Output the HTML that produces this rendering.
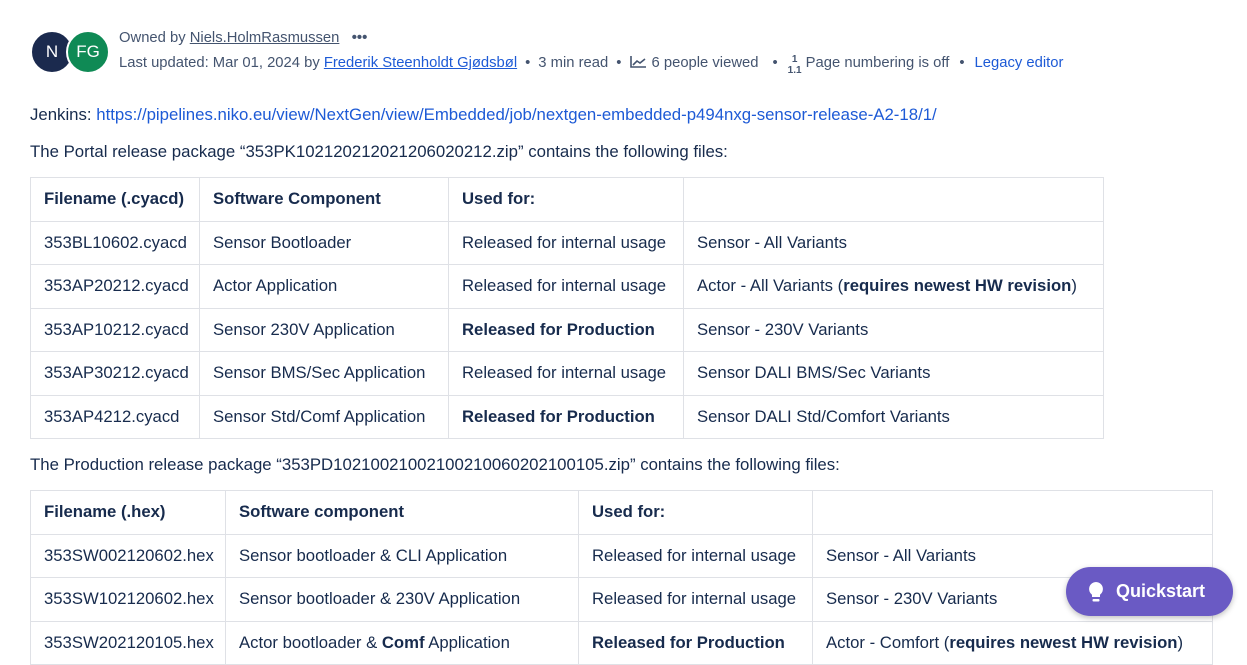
<!DOCTYPE html>
<html><head><meta charset="utf-8"><style>
body{margin:0;width:1247px;height:652px;overflow:hidden;background:#fff;font-family:"Liberation Sans",sans-serif;color:#172b4d;position:relative}
.av{position:absolute;top:30px;width:40px;height:40px;border-radius:50%;color:#fff;font-size:17px;text-align:center;line-height:40px;border:2px solid #fff}
.meta{position:absolute;left:119px;font-size:14.8px;color:#44546f;white-space:nowrap}
.meta a{color:#44546f;text-decoration:underline}
.meta a.b{color:#1d5ad6}
.dot{margin:0 8px}
p{position:absolute;left:30px;margin:0;font-size:16.8px;white-space:nowrap}
table{position:absolute;left:30px;border-collapse:collapse;font-size:16.7px;table-layout:fixed}
td{border:1px solid #dfe1e6;padding:0 13px;height:42.5px;white-space:nowrap;overflow:visible}
tr:first-child td{font-weight:bold}
.qs{position:absolute;left:1066px;top:567px;width:167px;height:49px;border-radius:25px;background:#6a5ac4;color:#fff;font-weight:bold;font-size:18px;line-height:49px;box-shadow:0 2px 6px rgba(0,0,0,.25)}
</style></head><body>
<div class="av" style="left:30px;background:#1b2a4e">N</div>
<div class="av" style="left:66px;background:#0f8a55">FG</div>
<div class="meta" style="top:30px">Owned by <a>Niels.HolmRasmussen</a> &nbsp;&nbsp;<b>•••</b></div>
<div class="meta" style="top:54px">Last updated: Mar 01, 2024 by <a class="b">Frederik Steenholdt Gjødsbøl</a><span class="dot">•</span>3 min read<span class="dot">•</span><svg width="18" height="14" viewBox="0 0 18 14" style="vertical-align:-2px"><path d="M2 1v11h15M4 10l4-4 3 2 5-4" fill="none" stroke="#44546f" stroke-width="1.6"/></svg> 6 people viewed<span class="dot" style="margin:0 10px 0 14px">•</span><span style="display:inline-block;font-size:10px;font-weight:bold;line-height:11px;vertical-align:-6px;text-align:center">1<br>1.1</span> Page numbering is off<span class="dot" style="margin:0 10px">•</span><a class="b" style="text-decoration:none">Legacy editor</a></div>
<p style="top:105px">Jenkins: <span style="color:#1d5ad6">https://pipelines.niko.eu/view/NextGen/view/Embedded/job/nextgen-embedded-p494nxg-sensor-release-A2-18/1/</span></p>
<p style="top:142px">The Portal release package “353PK102120212021206020212.zip” contains the following files:</p>
<table style="top:177px;width:1074px">
<colgroup><col style="width:169px"><col style="width:249px"><col style="width:235px"><col></colgroup>
<tr><td>Filename (.cyacd)</td><td>Software Component</td><td>Used for:</td><td></td></tr>
<tr><td>353BL10602.cyacd</td><td>Sensor Bootloader</td><td>Released for internal usage</td><td>Sensor - All Variants</td></tr>
<tr><td>353AP20212.cyacd</td><td>Actor Application</td><td>Released for internal usage</td><td>Actor - All Variants (<b>requires newest HW revision</b>)</td></tr>
<tr><td>353AP10212.cyacd</td><td>Sensor 230V Application</td><td><b>Released for Production</b></td><td>Sensor - 230V Variants</td></tr>
<tr><td>353AP30212.cyacd</td><td>Sensor BMS/Sec Application</td><td>Released for internal usage</td><td>Sensor DALI BMS/Sec Variants</td></tr>
<tr><td>353AP4212.cyacd</td><td>Sensor Std/Comf Application</td><td><b>Released for Production</b></td><td>Sensor DALI Std/Comfort Variants</td></tr>
</table>
<p style="top:455px">The Production release package “353PD10210021002100210060202100105.zip” contains the following files:</p>
<table style="top:490px;width:1183px">
<colgroup><col style="width:195px"><col style="width:353px"><col style="width:234px"><col></colgroup>
<tr><td>Filename (.hex)</td><td>Software component</td><td>Used for:</td><td></td></tr>
<tr><td>353SW002120602.hex</td><td>Sensor bootloader &amp; CLI Application</td><td>Released for internal usage</td><td>Sensor - All Variants</td></tr>
<tr><td>353SW102120602.hex</td><td>Sensor bootloader &amp; 230V Application</td><td>Released for internal usage</td><td>Sensor - 230V Variants</td></tr>
<tr><td>353SW202120105.hex</td><td>Actor bootloader &amp; <b>Comf</b> Application</td><td><b>Released for Production</b></td><td>Actor - Comfort (<b>requires newest HW revision</b>)</td></tr>
</table>
<div class="qs"><svg width="18" height="22" viewBox="0 0 18 22" style="position:absolute;left:21px;top:14px"><path d="M9 1a7 7 0 0 0-4 12.7V16h8v-2.3A7 7 0 0 0 9 1z" fill="#fff"/><rect x="5.5" y="18" width="7" height="2.5" rx="1" fill="#fff"/></svg><span style="position:absolute;left:50px">Quickstart</span></div>
</body></html>
